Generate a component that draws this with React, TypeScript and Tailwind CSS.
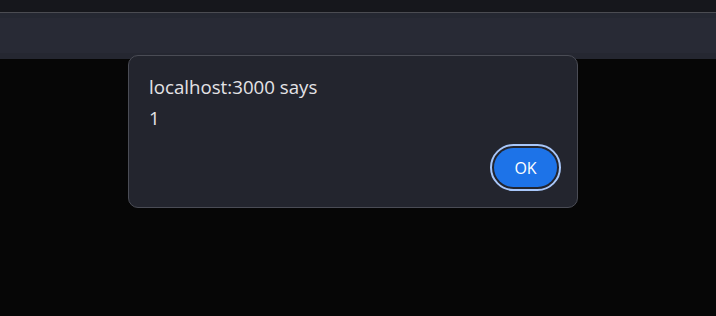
export default function App() {
  return (
    <div className="relative w-[716px] h-[316px] bg-[#060606] overflow-hidden" style={{ fontFamily: '"Open Sans", "Noto Sans", sans-serif' }}>
      <div className="h-[12px] bg-[#16171c]" />
      <div className="h-[1px] bg-[#4b4c52]" />
      <div className="h-[5px] bg-[#252832]" />
      <div className="h-[35px] bg-[#282a35]" />
      <div className="h-[6px] bg-[#252731]" />
      <div className="absolute left-[128px] top-[55px] w-[450px] h-[153px] rounded-[10px] border border-[#4a4c55] bg-[#23252e] pl-[20px] pr-[16px] pt-[19px]">
        <div className="text-[18.7px] leading-[24px] text-[#e3e3e6]">localhost:3000 says</div>
        <div className="mt-[6.5px] text-[18.7px] leading-[24px] text-[#e3e3e6]">1</div>
        <div className="flex justify-end mt-[14.5px]">
          <button className="h-[47px] w-[71px] rounded-full border-2 border-[#a8c7fa] p-[2px] bg-[#23252e]">
            <span className="flex h-full w-full items-center justify-center rounded-full bg-[#1d73e8] text-[16px] text-white">OK</span>
          </button>
        </div>
      </div>
    </div>
  );
}
